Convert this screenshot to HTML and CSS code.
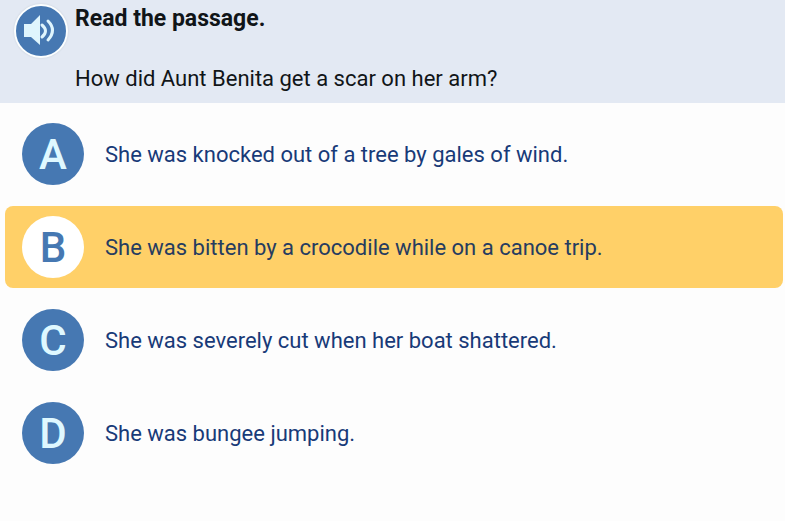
FILE: index.html
```html
<!DOCTYPE html>
<html lang="en">
<head>
    <meta charset="UTF-8">
    <meta name="viewport" content="width=device-width, initial-scale=1.0">
    <title>Reading Quiz</title>
    <link rel="stylesheet" href="styles.css">
</head>
<body>

    <header class="question">
        <button class="speaker" type="button" aria-label="Listen">
            <svg viewBox="0 0 50 50" aria-hidden="true">
                <path class="horn" d="M8 18h7l9-9v30l-9-8H8z"/>
                <path class="wave" d="M26 19q7 6 0 12M32 15q9 9 0 19"/>
            </svg>
        </button>
        <div class="prompt">
            <h1>Read the passage.</h1>
            <p>How did Aunt Benita get a scar on her arm?</p>
        </div>
    </header>

    <main class="choices">
        <button class="choice" type="button">
            <span class="letter">A</span>
            <span class="answer">She was knocked out of a tree by gales of wind.</span>
        </button>
        <button class="choice selected" type="button">
            <span class="letter">B</span>
            <span class="answer">She was bitten by a crocodile while on a canoe trip.</span>
        </button>
        <button class="choice" type="button">
            <span class="letter">C</span>
            <span class="answer">She was severely cut when her boat shattered.</span>
        </button>
        <button class="choice" type="button">
            <span class="letter">D</span>
            <span class="answer">She was bungee jumping.</span>
        </button>
    </main>

    <script>
        var choices = document.querySelectorAll(".choice");

        choices.forEach(function(choice) {
            choice.addEventListener("click", function() {
                document.querySelector(".selected").classList.remove("selected");
                choice.classList.add("selected");
            });
        });
    </script>

</body>
</html>
```
FILE: styles.css
```css
* {
    margin: 0;
    padding: 0;
    box-sizing: border-box;
}

body {
    background-color: #fdfdfd;
    color: #111518;
    font-family: Roboto, Arial, sans-serif;
    font-size: 22px;
    line-height: 30px;
}

button {
    border: none;
    background: none;
    font: inherit;
    cursor: pointer;
}

.question {
    display: flex;
    align-items: flex-start;
    gap: 7px;
    padding: 4px 14px 9px;
    background-color: #e3e9f3;
}

.speaker {
    flex: none;
    width: 54px;
    height: 54px;
    border: 2px solid #fbfeff;
    border-radius: 50%;
    background-color: #4678b2;
    box-shadow: 0 0 2px #c4ccd6;
}

.speaker svg {
    display: block;
    width: 50px;
    height: 50px;
}

.horn {
    fill: #dff5fd;
}

.wave {
    fill: none;
    stroke: #dff5fd;
    stroke-width: 3;
    stroke-linecap: round;
}

.prompt h1 {
    margin-bottom: 30px;
    font-size: 23px;
    font-weight: 700;
}

.choices {
    display: flex;
    flex-direction: column;
    gap: 11px;
    padding: 10px 2px 10px 5px;
}

.choice {
    display: flex;
    align-items: center;
    gap: 21px;
    padding: 10px 17px;
    border-radius: 8px;
    color: #183a78;
    text-align: left;
}

.letter {
    display: flex;
    flex: none;
    align-items: center;
    justify-content: center;
    width: 62px;
    height: 62px;
    padding-top: 2px;
    border-radius: 50%;
    background-color: #4678b2;
    color: #dff8ff;
    font-size: 42px;
    font-weight: 500;
}

.answer {
    padding-top: 2px;
}

.selected {
    background-color: #ffd068;
    color: #263c60;
}

.selected .letter {
    background-color: #fff;
    color: #4678b2;
}
```
